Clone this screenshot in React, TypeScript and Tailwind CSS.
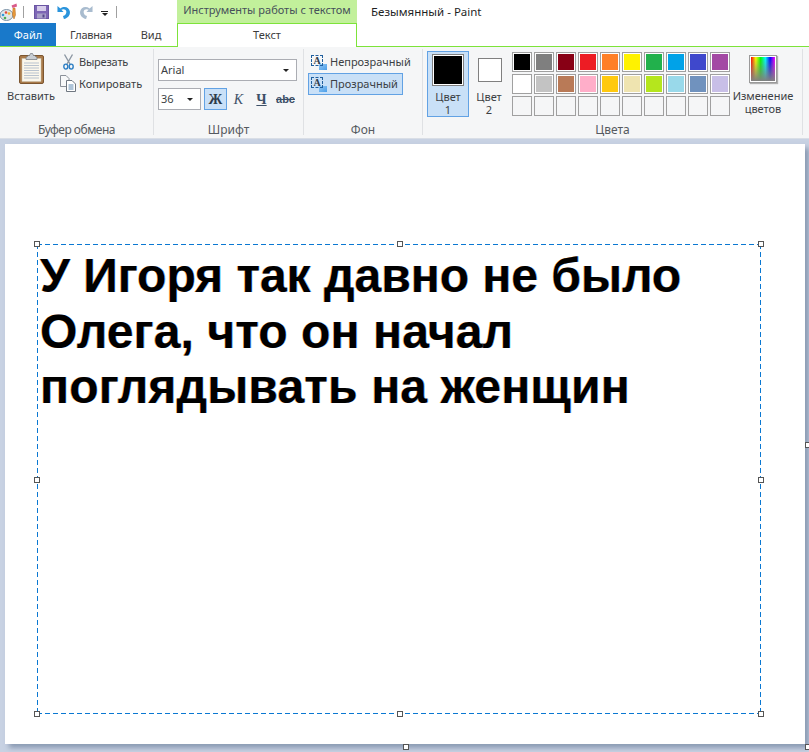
import React from "react";

const font = { fontFamily: '"Noto Sans", sans-serif' };
const serif = { fontFamily: '"Liberation Serif", serif' };

function Handle({ cls }: { cls: string }) {
  return <div className={`absolute w-[6px] h-[6px] bg-white border border-[#555555] ${cls}`} />;
}

function AppIcon() {
  return (
    <svg width="18" height="18" viewBox="0 0 18 18" className="block">
      <ellipse cx="6.5" cy="12" rx="6.5" ry="5.5" fill="#dfe7ea" stroke="#7d93a8" />
      <circle cx="3" cy="12" r="1.3" fill="#2f9ad8" />
      <circle cx="6" cy="9.5" r="1.3" fill="#e2483a" />
      <circle cx="9" cy="10.5" r="1.3" fill="#f2b632" />
      <circle cx="5" cy="15" r="1.3" fill="#4caf50" />
      <path d="M13 5 L15 5 L15.5 12 L14 16 L12.5 12 Z" fill="#e89a3c" stroke="#b36a22" strokeWidth="0.5" />
      <path d="M11.5 2.5 L16.5 0.5 L17 3.5 L12.5 5 Z" fill="#d95a8a" />
    </svg>
  );
}

function SaveIcon() {
  return (
    <svg width="15" height="14" viewBox="0 0 15 14" className="block">
      <rect x="0.5" y="0.5" width="14" height="13" fill="#7d66b5" stroke="#6a55a3" />
      <rect x="3" y="1" width="9" height="5" fill="#d7cdea" />
      <rect x="3" y="8.5" width="9" height="5" fill="#a8a0c8" />
      <rect x="8.5" y="9.5" width="2" height="3" fill="#54478c" />
    </svg>
  );
}

function UndoIcon({ color, flip }: { color: string; flip?: boolean }) {
  return (
    <svg width="14" height="14" viewBox="0 0 15 15" className={flip ? "block -scale-x-100" : "block"}>
      <path d="M0.5 1 L0.5 7.5 L7 7.5 L4.7 5.2 C6.5 3.8 9.6 4.6 10 7 C10.4 9.4 8.6 11.3 6.4 11.8 L7.4 15 C11.4 14.4 14.4 11 13.8 7 C13.1 2.6 8 0.6 3.6 3.7 Z" fill={color} />
    </svg>
  );
}

function PasteIcon() {
  return (
    <svg width="25" height="31" viewBox="0 0 25 31" className="block">
      <rect x="0.5" y="2.5" width="24" height="28" rx="1.5" fill="#a97a4a" stroke="#7c5630" />
      <rect x="3" y="5.5" width="19" height="23" fill="#fbf7ec" stroke="#c9c2ad" strokeWidth="0.5" />
      <path d="M5 10H20M5 12.5H20M5 15H20M5 17.5H20M5 20H20M5 22.5H20M5 25H20" stroke="#b9c3cf" strokeWidth="1" />
      <path d="M7 4.5 L9.5 2.5 L10.5 2.5 L11.5 0.5 L13.5 0.5 L14.5 2.5 L15.5 2.5 L18 4.5 L18 6.5 L7 6.5 Z" fill="#c8ced4" stroke="#6f767c" strokeWidth="0.7" />
    </svg>
  );
}

function CutIcon() {
  return (
    <svg width="11" height="16" viewBox="0 0 11 16" className="block">
      <path d="M1.5 0.5 L7 10 M9.5 0.5 L4 10" stroke="#8c97a3" strokeWidth="1.4" fill="none" />
      <ellipse cx="2.8" cy="12.6" rx="2" ry="2.5" fill="none" stroke="#2d7fc4" strokeWidth="1.4" />
      <ellipse cx="8.2" cy="12.6" rx="2" ry="2.5" fill="none" stroke="#2d7fc4" strokeWidth="1.4" />
    </svg>
  );
}

function CopyIcon() {
  return (
    <svg width="16" height="17" viewBox="0 0 16 17" className="block">
      <path d="M0.5 0.5 H6 L9 3.5 V11.5 H0.5 Z" fill="#f7f8f9" stroke="#8a9099" />
      <path d="M6.5 5.5 H12 L15.5 9 V16.5 H6.5 Z" fill="#ffffff" stroke="#6f7781" />
      <path d="M8.5 10H13.5M8.5 12H13.5M8.5 14H13.5" stroke="#5d89b3" />
    </svg>
  );
}

function BgIcon() {
  return (
    <span className="relative w-[16px] h-[15px] shrink-0 block">
      <span className="absolute right-0 bottom-0 w-[8px] h-[6px] bg-gradient-to-br from-[#8fc7f5] to-[#4a9ee8]" />
      <span className="absolute left-0 top-0 w-[12px] h-[11px] border border-dashed border-[#1f5f9e]" />
      <span className="absolute left-[2px] top-0 w-[8px] text-center text-[10px] leading-[11px] font-bold text-[#2f3c4c]" style={serif}>A</span>
    </span>
  );
}

function Caret() {
  return <span className="w-0 h-0 border-x-[3px] border-x-transparent border-t-[3px] border-t-[#222222]" />;
}

function Group({ w, label, children, last, labelCls = "" }: { w: string; label: string; children?: React.ReactNode; last?: boolean; labelCls?: string }) {
  return (
    <div className={`${w} h-full flex flex-col shrink-0 ${last ? "" : "border-r border-[#dfe1e4]"}`}>
      <div className="flex-1 min-h-0 flex">{children}</div>
      <div className={`h-[15px] pt-[2px] text-center text-[12px] leading-[15px] text-[#555a60] ${labelCls}`}>{label}</div>
    </div>
  );
}

const row1 = ["#000000", "#7f7f7f", "#880015", "#ed1c24", "#ff7f27", "#fff200", "#22b14c", "#00a2e8", "#3f48cc", "#a349a4"];
const row2 = ["#ffffff", "#c3c3c3", "#b97a57", "#ffaec9", "#ffc90e", "#efe4b0", "#b5e61d", "#99d9ea", "#7092be", "#c8bfe7"];
const row3 = Array.from({ length: 10 }, () => "");

function Swatch({ color }: { color: string }) {
  return (
    <div className={`w-[20px] h-[20px] border border-[#a0a0a0] ${color ? "bg-white p-[1px]" : ""}`}>
      {color ? <div className="w-full h-full" style={{ backgroundColor: color }} /> : null}
    </div>
  );
}

const dashH = "absolute h-[1px] left-0 right-0 bg-[repeating-linear-gradient(to_right,#0a78d2_0,#0a78d2_5px,transparent_5px,transparent_8px)]";
const dashV = "absolute w-[1px] top-0 bottom-0 bg-[repeating-linear-gradient(to_bottom,#0a78d2_0,#0a78d2_5px,transparent_5px,transparent_8px)]";

export default function App() {
  return (
    <div className="w-[809px] h-[752px] overflow-hidden flex flex-col bg-[#c8d2e3] text-[#3c3f44]" style={font}>
      {/* Title row */}
      <div className="h-[23px] flex bg-white shrink-0">
        <div className="w-[177px] flex items-center shrink-0">
          <AppIcon />
          <span className="w-[1px] h-[12px] bg-[#a0a0a0] ml-[5px]" />
          <span className="ml-[10px]"><SaveIcon /></span>
          <span className="ml-[8px]"><UndoIcon color="#2b94dc" /></span>
          <span className="ml-[8px]"><UndoIcon color="#a9bccf" flip /></span>
          <span className="ml-[8px] mt-[3px] flex flex-col items-center gap-[1px]">
            <span className="w-[7px] h-[1px] bg-[#222222]" />
            <Caret />
          </span>
          <span className="w-[1px] h-[12px] bg-[#a0a0a0] ml-[8px]" />
        </div>
        <div className="w-[180px] bg-[#c2f09b] shrink-0 text-center text-[11px] leading-[20px] text-[#46505a]">Инструменты работы с текстом</div>
        <div className="ml-[14px] text-[11.5px] leading-[23px] text-[#1f1f1f]">Безымянный - Paint</div>
      </div>
      {/* Tabs */}
      <div className="h-[24px] flex bg-white shrink-0 text-[11px]">
        <div className="w-[177px] flex border-b border-[#7de33a] shrink-0">
          <div className="w-[56px] bg-[#1979ca] text-white text-center leading-[23px]">Файл</div>
          <div className="w-[70px] text-center leading-[23px] text-[#3c3c3c] tracking-[-0.2px]">Главная</div>
          <div className="w-[50px] text-center leading-[23px] text-[#3c3c3c]">Вид</div>
        </div>
        <div className="w-[180px] border-x border-t border-[#7de33a] bg-white text-center leading-[22px] shrink-0 text-[#3c3c3c]">Текст</div>
        <div className="flex-1 border-b border-[#7de33a]" />
      </div>
      {/* Ribbon */}
      <div className="h-[91px] bg-[#f5f6f7] flex shrink-0 pt-[2px] pb-[3px] text-[11px] leading-[13px]">
        <Group w="w-[154px]" label="Буфер обмена" labelCls="tracking-[-0.5px]">
          <div className="w-[60px] flex flex-col items-center pt-[4px] shrink-0 pl-[2px]">
            <PasteIcon />
            <span className="mt-[5px]">Вставить</span>
          </div>
          <div className="flex flex-col">
            <div className="flex items-center h-[21px] mt-[2px] pl-[3px]">
              <CutIcon />
              <span className="ml-[5px] tracking-[-0.2px]">Вырезать</span>
            </div>
            <div className="flex items-center h-[22px]">
              <CopyIcon />
              <span className="ml-[3px]">Копировать</span>
            </div>
          </div>
        </Group>
        <Group w="w-[150px]" label="Шрифт">
          <div className="pl-[4px] pt-[10px] flex flex-col gap-[7px]">
            <div className="w-[139px] h-[22px] bg-white border border-[#abadb3] flex items-center justify-between pl-[2px] pr-[7px]">
              <span className="pb-[1px]">Arial</span>
              <Caret />
            </div>
            <div className="flex items-center">
              <div className="w-[43px] h-[22px] bg-white border border-[#abadb3] flex items-center justify-between pl-[2px] pr-[7px]">
                <span className="pb-[1px]">36</span>
                <Caret />
              </div>
              <div className="ml-[3px] w-[23px] h-[22px] bg-[#c9e0f7] border border-[#62a2e4] flex items-center justify-center text-[14px] font-bold text-[#2c3a4a]" style={serif}>Ж</div>
              <div className="w-[23px] h-[22px] flex items-center justify-center text-[14px] italic text-[#3d5068]" style={serif}>К</div>
              <div className="w-[23px] h-[22px] flex items-center justify-center text-[14px] font-bold underline text-[#3d5068]" style={serif}>Ч</div>
              <div className="w-[25px] h-[22px] flex items-center justify-center text-[11px] font-bold line-through text-[#3d5068]" style={{ fontFamily: '"Liberation Sans", sans-serif' }}>abc</div>
            </div>
          </div>
        </Group>
        <Group w="w-[119px]" label="Фон">
          <div className="pl-[4px] pt-[2px] flex flex-col">
            <div className="w-[95px] h-[22px] flex items-center pl-[3px] gap-[3px]">
              <BgIcon />
              <span className="whitespace-nowrap pb-[2px]">Непрозрачный</span>
            </div>
            <div className="w-[95px] h-[22px] flex items-center pl-[2px] gap-[3px] bg-[#c9e0f7] border border-[#62a2e4]">
              <BgIcon />
              <span className="whitespace-nowrap pb-[2px]">Прозрачный</span>
            </div>
          </div>
        </Group>
        <Group w="w-[380px]" label="Цвета">
          <div className="pl-[4px] pt-[2px] flex">
            <div className="w-[42px] h-[66px] bg-[#c9e0f7] border border-[#62a2e4] flex flex-col items-center pt-[2px] shrink-0">
              <div className="w-[32px] h-[32px] bg-black border border-[#808080] shadow-[inset_0_0_0_1px_#ffffff]" />
              <span className="mt-[4px] text-center">Цвет<br />1</span>
            </div>
            <div className="w-[42px] -ml-[1px] flex flex-col items-center pt-[7px] shrink-0">
              <div className="w-[24px] h-[24px] bg-white border border-[#808080] translate-x-[1px]" />
              <span className="mt-[8px] text-center">Цвет<br />2</span>
            </div>
            <div className="ml-[2px] mt-[1px] flex flex-col gap-[2px]">
              {[row1, row2, row3].map((r, i) => (
                <div key={i} className="flex gap-[2px]">
                  {r.map((c, j) => <Swatch key={j} color={c} />)}
                </div>
              ))}
            </div>
            <div className="w-[72px] ml-[-3px] flex flex-col items-center pt-[4px] shrink-0">
              <div className="w-[28px] h-[28px] border border-[#9a9a9a] bg-white p-[1px] shadow-[1px_1px_1px_#b0b0b0]">
                <div className="w-full h-full bg-[linear-gradient(to_bottom,rgba(128,128,128,0)_0%,rgba(128,128,128,1)_100%),linear-gradient(to_right,#ff0000,#ffff00,#00ff00,#00ffff,#0000ff,#ff00ff)]" />
              </div>
              <span className="mt-[6px] text-center">Изменение<br />цветов</span>
            </div>
          </div>
        </Group>
      </div>
      {/* Work area */}
      <div className="h-[1px] bg-[#d9dee6] shrink-0" />
      <div className="flex-1 pt-[5px] pl-[5px] relative">
        <div className="w-[800px] h-[600px] bg-white relative shadow-[4px_4px_5px_rgba(90,110,140,0.55)]">
          <div className="absolute left-[32px] top-[100px] w-[724px] h-[470px]">
            <div className={`${dashH} top-0`} />
            <div className={`${dashH} bottom-0`} />
            <div className={`${dashV} left-0`} />
            <div className={`${dashV} right-0`} />
            <Handle cls="-left-[3px] -top-[3px]" />
            <Handle cls="left-[360px] -top-[3px]" />
            <Handle cls="-right-[3px] -top-[3px]" />
            <Handle cls="-left-[3px] top-[233px]" />
            <Handle cls="-right-[3px] top-[233px]" />
            <Handle cls="-left-[3px] -bottom-[3px]" />
            <Handle cls="left-[360px] -bottom-[3px]" />
            <Handle cls="-right-[3px] -bottom-[3px]" />
            <div
              className="pl-[3px] pt-[4px] text-[48px] leading-[55.5px] font-bold text-black [text-shadow:-0.6px_0_0_rgba(255,130,0,0.55),0.6px_0_0_rgba(0,120,255,0.55)]"
              style={{ fontFamily: '"Liberation Sans", Arial, sans-serif' }}
            >
              <div className="whitespace-nowrap">У Игоря так давно не было</div>
              <div className="whitespace-nowrap tracking-[0.1px]">Олега, что он начал</div>
              <div className="whitespace-nowrap tracking-[0.18px]">поглядывать на женщин</div>
            </div>
          </div>
          <Handle cls="left-[398px] top-[600px]" />
          <Handle cls="left-[800px] top-[298px]" />
          <Handle cls="left-[800px] top-[600px]" />
        </div>
      </div>
    </div>
  );
}
